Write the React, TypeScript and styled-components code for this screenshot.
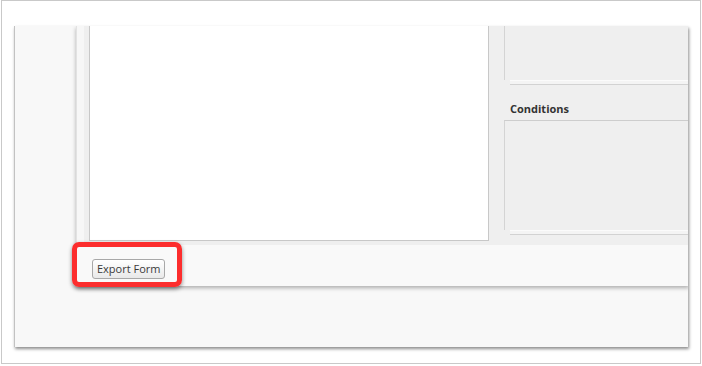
import React from 'react';
import styled, { createGlobalStyle } from 'styled-components';

const GlobalStyle = createGlobalStyle`
  html, body {
    margin: 0;
    padding: 0;
    background: #ffffff;
    font-family: 'Open Sans', 'Liberation Sans', sans-serif;
  }
  * {
    box-sizing: border-box;
  }
`;

const Frame = styled.div`
  position: relative;
  margin-left: 1px;
  width: 700px;
  height: 364px;
  border: 1px solid #c9c9c9;
  background: #ffffff;
  padding: 25px 0 0 12px;
`;

const Shell = styled.div`
  display: flex;
  width: 674px;
  height: 321px;
  padding-left: 61px;
  background: #f8f8f8;
  border-left: 1px solid #c2c2c2;
  box-shadow: 1px 2px 3px rgba(0, 0, 0, 0.45);
  overflow: hidden;
`;

const Workspace = styled.div`
  display: flex;
  flex-direction: column;
  width: 613px;
  height: 260px;
  border-left: 1px solid #e2e2e2;
  box-shadow: 0 2px 4px rgba(0, 0, 0, 0.3);
`;

const EditorRow = styled.div`
  display: flex;
  height: 219px;
  background: #efefef;
`;

const Gutter = styled.div`
  width: 7px;
  flex: none;
  background: #f7f7f7;
`;

const Canvas = styled.div`
  flex: none;
  width: 400px;
  height: 215px;
  margin-left: 5px;
  background: #ffffff;
  border: 1px solid #c8c8c8;
  border-top: none;
`;

const Side = styled.div`
  flex: none;
  width: 220px;
  margin-left: 15px;
  display: flex;
  flex-direction: column;
`;

const SideBox = styled.div<{ $height: number; $top?: boolean }>`
  height: ${(p) => p.$height}px;
  background: #efefef;
  border-left: 1px solid #d4d4d4;
  border-top: ${(p) => (p.$top ? '1px solid #cdcdcd' : 'none')};
`;

const Ledge = styled.div`
  height: 5px;
  margin-left: 6px;
  background: #f4f4f4;
  border-top: 1px solid #fbfbfb;
  border-bottom: 1px solid #d2d2d2;
`;

const SectionTitle = styled.h3`
  margin: 0;
  height: 35px;
  padding: 16px 0 0 6px;
  font-size: 11px;
  line-height: 15px;
  font-weight: 700;
  color: #333333;
`;

const Footer = styled.div`
  height: 41px;
  padding: 11px 0 0 15px;
  background: #f9f9f9;
`;

const Button = styled.button`
  height: 20px;
  padding: 0 4px;
  font-family: 'Open Sans', 'Liberation Sans', sans-serif;
  font-size: 11px;
  line-height: 18px;
  color: #3a3a3a;
  background: linear-gradient(#ffffff, #e9e9e9);
  border: 1px solid #a8a8a8;
  border-radius: 3px;
`;

const Highlight = styled.div`
  position: absolute;
  left: 70px;
  top: 241px;
  width: 110px;
  height: 45px;
  border: 5px solid #fc2d2d;
  border-radius: 7px;
  box-shadow: 0 2px 4px rgba(0, 0, 0, 0.45);
  pointer-events: none;
`;

const App = () => {
  return (
    <>
      <GlobalStyle />
      <Frame>
        <Shell>
          <Workspace>
            <EditorRow>
              <Gutter />
              <Canvas />
              <Side>
                <SideBox $height={54} />
                <Ledge />
                <SectionTitle>Conditions</SectionTitle>
                <SideBox $height={110} $top />
                <Ledge />
              </Side>
            </EditorRow>
            <Footer>
              <Button>Export Form</Button>
            </Footer>
          </Workspace>
        </Shell>
        <Highlight />
      </Frame>
    </>
  );
};

export default App;
